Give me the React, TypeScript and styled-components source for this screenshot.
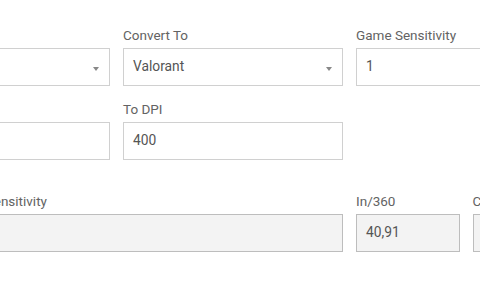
import styled, { createGlobalStyle } from 'styled-components'

const GlobalStyle = createGlobalStyle`
    html, body {
        margin: 0;
        padding: 0;
        background: #fff;
        overflow: hidden;
    }
    body {
        font-family: Roboto, "Liberation Sans", Arial, sans-serif;
    }
`

const Page = styled.div`
    width: 480px;
    height: 288px;
    overflow: hidden;
    padding-top: 26px;
    box-sizing: border-box;
`

const Form = styled.div`
    display: grid;
    grid-template-columns: repeat(3, 220px);
    column-gap: 13px;
    margin-left: -110px;
    width: 686px;
`

const Field = styled.div<{ $span?: number; $top?: number }>`
    display: flex;
    flex-direction: column;
    grid-column: span ${(p) => p.$span ?? 1};
    margin-top: ${(p) => p.$top ?? 0}px;
    min-width: 0;
`

const Split = styled.div<{ $top?: number }>`
    display: grid;
    grid-template-columns: 1fr 1fr;
    column-gap: 13px;
    margin-top: ${(p) => p.$top ?? 0}px;
    min-width: 0;
`

const Label = styled.label`
    font-size: 13.5px;
    line-height: 18px;
    color: #636363;
    margin-bottom: 4px;
    white-space: nowrap;
`

const Box = styled.div<{ $readonly?: boolean }>`
    position: relative;
    height: 38px;
    box-sizing: border-box;
    display: flex;
    align-items: center;
    padding: 0 9px 2px;
    font-size: 13.8px;
    color: #555;
    background: ${(p) => (p.$readonly ? '#f3f3f3' : '#fff')};
    border: 1px solid ${(p) => (p.$readonly ? '#bdbdbd' : '#d0d0d0')};
`

const Caret = styled.span`
    position: absolute;
    right: 10px;
    top: 50%;
    margin-top: 0;
    width: 0;
    height: 0;
    border-left: 3.5px solid transparent;
    border-right: 3.5px solid transparent;
    border-top: 4px solid #888;
`

export default function App() {
    return (
        <>
            <GlobalStyle />
            <Page>
                <Form>
                    <Field>
                        <Label>Convert From</Label>
                        <Box>
                            Counter-Strike 2
                            <Caret />
                        </Box>
                    </Field>
                    <Field>
                        <Label>Convert To</Label>
                        <Box>
                            Valorant
                            <Caret />
                        </Box>
                    </Field>
                    <Field>
                        <Label>Game Sensitivity</Label>
                        <Box>1</Box>
                    </Field>

                    <Field $top={14}>
                        <Label>From DPI</Label>
                        <Box>800</Box>
                    </Field>
                    <Field $top={14}>
                        <Label>To DPI</Label>
                        <Box>400</Box>
                    </Field>
                    <div />

                    <Field $span={2} $top={32}>
                        <Label>Your Converted Sensitivity</Label>
                        <Box $readonly></Box>
                    </Field>
                    <Split $top={32}>
                        <Field>
                            <Label>In/360</Label>
                            <Box $readonly>40,91</Box>
                        </Field>
                        <Field>
                            <Label>Cm/360</Label>
                            <Box $readonly>103,91</Box>
                        </Field>
                    </Split>
                </Form>
            </Page>
        </>
    )
}
